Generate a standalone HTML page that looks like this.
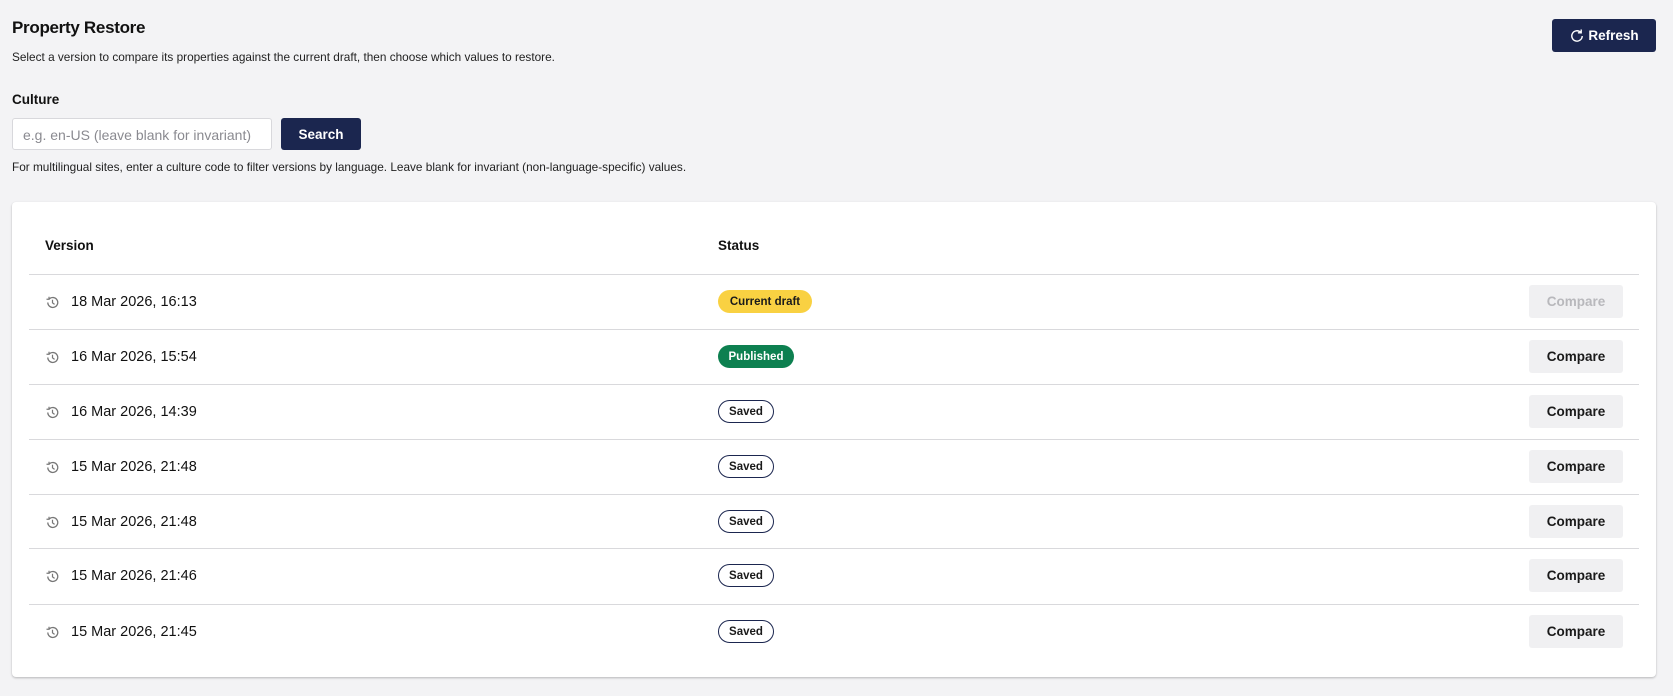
<!DOCTYPE html>
<html><head><meta charset="utf-8"><style>
*{box-sizing:border-box;margin:0;padding:0}
body{width:1673px;height:696px;background:#f3f3f5;font-family:"Liberation Sans",sans-serif;color:#111;position:relative;overflow:hidden}
.a{position:absolute}
h1{position:absolute;left:12px;top:18px;font-size:17px;font-weight:bold;letter-spacing:-0.3px}
.sub{left:12px;top:50px;font-size:11.8px;color:#222}
.lbl{left:12px;top:92px;font-size:13.5px;font-weight:bold}
.inp{left:12px;top:118px;width:260px;height:32px;background:#fff;border:1px solid #d8d8dc;border-radius:3px;font-size:14px;color:#8a8a90;padding:8px 10px}
.btn{background:#1b264f;color:#fff;font-weight:bold;font-size:13.5px;border-radius:3px;display:flex;align-items:center;justify-content:center}
.help{left:12px;top:160px;font-size:11.8px;color:#222}
.card{left:12px;top:202px;width:1644px;height:475px;background:#fff;border-radius:4px;box-shadow:0 1px 2px rgba(0,0,0,.25)}
.hd{top:238px;font-size:13.5px;font-weight:bold}
.line{left:29px;width:1610px;height:1px;background:#d9d9dc}
.row{left:0;width:1673px;height:55px}
.date{position:absolute;left:71px;top:1px;line-height:55px;font-size:14.5px}
.ic{position:absolute;left:45px;top:21px}
.badge{position:absolute;left:718px;top:16px;height:23px;border-radius:12px;font-size:11.5px;font-weight:bold;display:flex;align-items:center;justify-content:center}
.cmp{position:absolute;left:1529px;top:11px;width:94px;height:33px;background:#f0f0f2;border-radius:3px;font-size:13.5px;font-weight:bold;display:flex;align-items:center;justify-content:center;color:#1a1a1a}
</style></head><body>
<h1>Property Restore</h1>
<div class="a sub">Select a version to compare its properties against the current draft, then choose which values to restore.</div>
<div class="a btn" style="left:1552px;top:19px;width:104px;height:33px"><svg width="16" height="16" viewBox="0 0 16 16" style="margin-right:3px"><path d="M13.2 8a5.2 5.2 0 1 1-1.5-3.7" fill="none" stroke="#fff" stroke-width="1.4"/><path d="M12.2 1.5v3.3H8.9" fill="none" stroke="#fff" stroke-width="1.4"/></svg>Refresh</div>
<div class="a lbl">Culture</div>
<div class="a inp">e.g. en-US (leave blank for invariant)</div>
<div class="a btn" style="left:281px;top:118px;width:80px;height:32px">Search</div>
<div class="a help">For multilingual sites, enter a culture code to filter versions by language. Leave blank for invariant (non-language-specific) values.</div>
<div class="a card"></div>
<div class="a hd" style="left:45px">Version</div>
<div class="a hd" style="left:718px">Status</div>
<div class="a line" style="top:274px"></div>

<div class="a row" style="top:274px"><svg class="ic" width="15" height="15" viewBox="0 0 16 16"><path d="M3 8a5.3 5.3 0 1 0 1.6-3.8" fill="none" stroke="#777" stroke-width="1.4"/><path d="M4.3 1.8v2.7H1.6" fill="none" stroke="#777" stroke-width="1.3"/><path d="M8 5v3.4l2.2 1.6" fill="none" stroke="#777" stroke-width="1.3"/></svg><div class="date">18 Mar 2026, 16:13</div><div class="badge" style="width:94px;background:#f9d142;color:#1a1a1a">Current draft</div><div class="cmp" style="color:#b8b8bc">Compare</div></div>
<div class="a line" style="top:329px"></div>
<div class="a row" style="top:329px"><svg class="ic" width="15" height="15" viewBox="0 0 16 16"><path d="M3 8a5.3 5.3 0 1 0 1.6-3.8" fill="none" stroke="#777" stroke-width="1.4"/><path d="M4.3 1.8v2.7H1.6" fill="none" stroke="#777" stroke-width="1.3"/><path d="M8 5v3.4l2.2 1.6" fill="none" stroke="#777" stroke-width="1.3"/></svg><div class="date">16 Mar 2026, 15:54</div><div class="badge" style="width:76px;background:#0d8050;color:#fff">Published</div><div class="cmp">Compare</div></div>
<div class="a line" style="top:384px"></div>
<div class="a row" style="top:384px"><svg class="ic" width="15" height="15" viewBox="0 0 16 16"><path d="M3 8a5.3 5.3 0 1 0 1.6-3.8" fill="none" stroke="#777" stroke-width="1.4"/><path d="M4.3 1.8v2.7H1.6" fill="none" stroke="#777" stroke-width="1.3"/><path d="M8 5v3.4l2.2 1.6" fill="none" stroke="#777" stroke-width="1.3"/></svg><div class="date">16 Mar 2026, 14:39</div><div class="badge" style="width:56px;border:1px solid #1b264f;color:#1a1a1a">Saved</div><div class="cmp">Compare</div></div>
<div class="a line" style="top:439px"></div>
<div class="a row" style="top:439px"><svg class="ic" width="15" height="15" viewBox="0 0 16 16"><path d="M3 8a5.3 5.3 0 1 0 1.6-3.8" fill="none" stroke="#777" stroke-width="1.4"/><path d="M4.3 1.8v2.7H1.6" fill="none" stroke="#777" stroke-width="1.3"/><path d="M8 5v3.4l2.2 1.6" fill="none" stroke="#777" stroke-width="1.3"/></svg><div class="date">15 Mar 2026, 21:48</div><div class="badge" style="width:56px;border:1px solid #1b264f;color:#1a1a1a">Saved</div><div class="cmp">Compare</div></div>
<div class="a line" style="top:494px"></div>
<div class="a row" style="top:494px"><svg class="ic" width="15" height="15" viewBox="0 0 16 16"><path d="M3 8a5.3 5.3 0 1 0 1.6-3.8" fill="none" stroke="#777" stroke-width="1.4"/><path d="M4.3 1.8v2.7H1.6" fill="none" stroke="#777" stroke-width="1.3"/><path d="M8 5v3.4l2.2 1.6" fill="none" stroke="#777" stroke-width="1.3"/></svg><div class="date">15 Mar 2026, 21:48</div><div class="badge" style="width:56px;border:1px solid #1b264f;color:#1a1a1a">Saved</div><div class="cmp">Compare</div></div>
<div class="a line" style="top:548px"></div>
<div class="a row" style="top:548px"><svg class="ic" width="15" height="15" viewBox="0 0 16 16"><path d="M3 8a5.3 5.3 0 1 0 1.6-3.8" fill="none" stroke="#777" stroke-width="1.4"/><path d="M4.3 1.8v2.7H1.6" fill="none" stroke="#777" stroke-width="1.3"/><path d="M8 5v3.4l2.2 1.6" fill="none" stroke="#777" stroke-width="1.3"/></svg><div class="date">15 Mar 2026, 21:46</div><div class="badge" style="width:56px;border:1px solid #1b264f;color:#1a1a1a">Saved</div><div class="cmp">Compare</div></div>
<div class="a line" style="top:604px"></div>
<div class="a row" style="top:604px"><svg class="ic" width="15" height="15" viewBox="0 0 16 16"><path d="M3 8a5.3 5.3 0 1 0 1.6-3.8" fill="none" stroke="#777" stroke-width="1.4"/><path d="M4.3 1.8v2.7H1.6" fill="none" stroke="#777" stroke-width="1.3"/><path d="M8 5v3.4l2.2 1.6" fill="none" stroke="#777" stroke-width="1.3"/></svg><div class="date">15 Mar 2026, 21:45</div><div class="badge" style="width:56px;border:1px solid #1b264f;color:#1a1a1a">Saved</div><div class="cmp">Compare</div></div>
</body></html>
